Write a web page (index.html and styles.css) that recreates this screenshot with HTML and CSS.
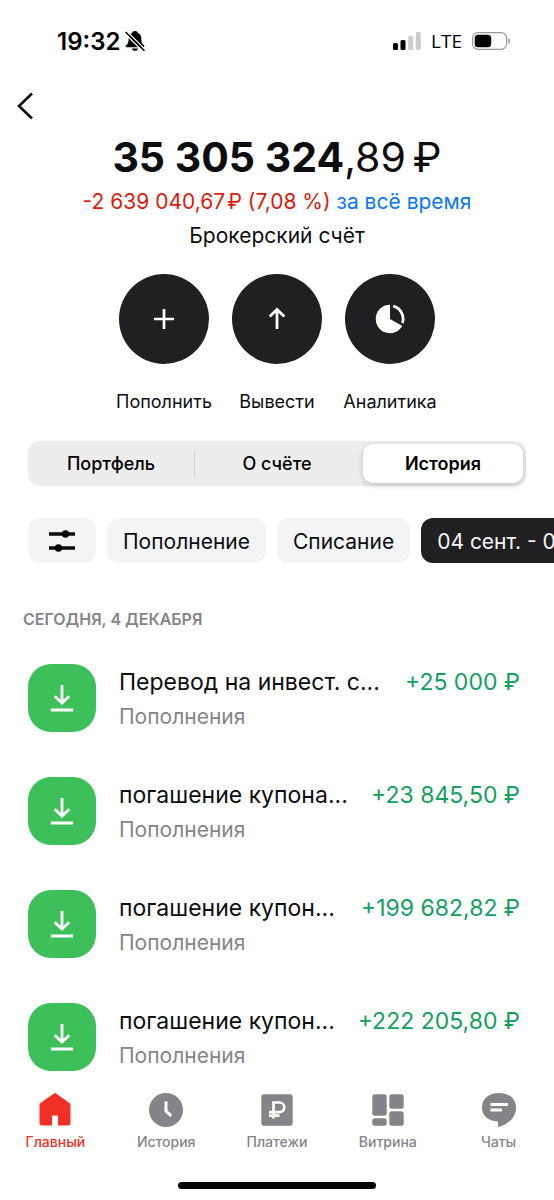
FILE: index.html
```html
<!DOCTYPE html>
<html lang="ru">
<head>
<meta charset="utf-8">
<meta name="viewport" content="width=device-width, initial-scale=1">
<title>Брокерский счёт</title>
<link rel="stylesheet" href="styles.css">
</head>
<body>
<div class="app">
  <div class="status">
    <div class="status-left">
      <span class="clock">19:32</span>
      <svg class="bell" width="20" height="20" viewBox="0 0 20 20" aria-hidden="true">
        <path d="M10 0c-1.600 0-2.700.8-3 2C4.600 3 3.600 5.300 3.600 8c0 4-1 5-2.600 6.300-.7.700-.4 1.900.6 1.900h16.800c1 0 1.300-1.200.6-1.900C17.400 13 16.400 12 16.400 8c0-2.700-1-5-3.400-6-.3-1.200-1.400-2-3-2z"/>
        <path d="M7 17.500h6c-.3 1.500-1.500 2.300-3 2.300s-2.700-.8-3-2.300z"/>
        <path d="M0 2.500L18 20.500M2 .3L20.200 18.500" stroke="#fff" stroke-width="1.300"/>
        <path d="M.6 1L19.400 19.800" stroke="#000" stroke-width="1.500"/>
      </svg>
    </div>
    <div class="status-right">
      <svg width="28" height="18" viewBox="0 0 28 18" aria-hidden="true">
        <rect x="0" y="11" width="5" height="7" rx="1.500"/>
        <rect x="7.500" y="8" width="5" height="10" rx="1.500"/>
        <rect x="15.200" y="4" width="5" height="14" rx="1.500" fill="#ccc"/>
        <rect x="22.800" y="0" width="5" height="18" rx="1.500" fill="#ccc"/>
      </svg>
      <span class="network">LTE</span>
      <svg width="39" height="18" viewBox="0 0 39 18" aria-hidden="true">
        <rect x=".6" y=".6" width="34" height="16.800" rx="5.500" fill="none" stroke="#999" stroke-width="1.200"/>
        <rect x="2.700" y="2.700" width="16.500" height="12.600" rx="3.500"/>
        <path d="M36.300 6v6c1.200-.5 1.900-1.600 1.900-3s-.7-2.500-1.900-3z" fill="#999"/>
      </svg>
    </div>
  </div>

  <header class="topbar">
    <button class="back" type="button" aria-label="Назад">
      <svg width="18" height="28" viewBox="0 0 18 28"><path d="M16 1.500L3 14l13 12.500" fill="none" stroke="#0d0d0f" stroke-width="2.600"/></svg>
    </button>
  </header>

  <section class="summary">
    <h1 class="balance"><strong>35 305 324</strong>,89<span class="thin-gap">₽</span></h1>
    <p class="result"><span class="loss">-2 639 040,67<span class="hair-gap">₽</span> (7,08 %)</span> <a class="period" href="#">за всё время</a></p>
    <p class="account">Брокерский счёт</p>
  </section>

  <div class="actions">
    <button class="action" type="button">
      <span class="disc"><svg width="30" height="30" viewBox="0 0 30 30"><path d="M15 5v20M5 15h20" fill="none" stroke="#fff" stroke-width="2.700"/></svg></span>
      <span>Пополнить</span>
    </button>
    <button class="action" type="button">
      <span class="disc"><svg width="30" height="30" viewBox="0 0 30 30"><path d="M15 25V6M7.700 12.500L15 5.500l7.300 7" fill="none" stroke="#fff" stroke-width="2.800"/></svg></span>
      <span>Вывести</span>
    </button>
    <button class="action" type="button">
      <span class="disc"><svg width="30" height="30" viewBox="0 0 30 30"><path d="M15 15V.8A14.200 14.200 0 1 0 27.300 22z" fill="#fff"/><path d="M18.200 2.200A13 13 0 0 1 27.400 19" fill="none" stroke="#fff" stroke-width="2.800"/></svg></span>
      <span>Аналитика</span>
    </button>
  </div>

  <div class="segments">
    <button class="segment" type="button">Портфель</button>
    <button class="segment divided" type="button">О счёте</button>
    <button class="segment" type="button" aria-pressed="true"><span class="selected">История</span></button>
  </div>

  <div class="chips">
    <button class="chip filter" type="button" aria-label="Фильтры">
      <svg width="26" height="22" viewBox="0 0 26 22"><path d="M0 4h26M0 18h26" stroke="#0d0d0f" stroke-width="3.600"/><circle cx="16.500" cy="4" r="3.700"/><circle cx="9.500" cy="18" r="3.700"/></svg>
    </button>
    <button class="chip" type="button">Пополнение</button>
    <button class="chip" type="button">Списание</button>
    <button class="chip dark" type="button">04 сент. - 04 дек.</button>
  </div>

  <main class="history">
    <h2 class="day">СЕГОДНЯ, 4 ДЕКАБРЯ</h2>
    <ul class="list">
      <li class="row">
        <span class="badge"><svg width="24" height="28" viewBox="0 0 24 28"><path d="M12 1v18M4.800 12.300L12 19l7.200-6.700M.8 26h22.400" fill="none" stroke="#fff" stroke-width="2.800"/></svg></span>
        <div class="details"><p class="name">Перевод на инвест. с...</p><p class="kind">Пополнения</p></div>
        <span class="sum">+25 000 ₽</span>
      </li>
      <li class="row">
        <span class="badge"><svg width="24" height="28" viewBox="0 0 24 28"><path d="M12 1v18M4.800 12.300L12 19l7.200-6.700M.8 26h22.400" fill="none" stroke="#fff" stroke-width="2.800"/></svg></span>
        <div class="details"><p class="name">погашение купона...</p><p class="kind">Пополнения</p></div>
        <span class="sum">+23 845,50 ₽</span>
      </li>
      <li class="row">
        <span class="badge"><svg width="24" height="28" viewBox="0 0 24 28"><path d="M12 1v18M4.800 12.300L12 19l7.200-6.700M.8 26h22.400" fill="none" stroke="#fff" stroke-width="2.800"/></svg></span>
        <div class="details"><p class="name">погашение купон...</p><p class="kind">Пополнения</p></div>
        <span class="sum">+199 682,82 ₽</span>
      </li>
      <li class="row">
        <span class="badge"><svg width="24" height="28" viewBox="0 0 24 28"><path d="M12 1v18M4.800 12.300L12 19l7.200-6.700M.8 26h22.400" fill="none" stroke="#fff" stroke-width="2.800"/></svg></span>
        <div class="details"><p class="name">погашение купон...</p><p class="kind">Пополнения</p></div>
        <span class="sum">+222 205,80 ₽</span>
      </li>
    </ul>
  </main>

  <nav class="tabs">
    <a class="tab active" href="#">
      <svg width="34" height="34" viewBox="0 0 34 34"><path d="M16 .4q1-.7 2 0L31.500 10q1 .8 1 2v18q0 2.500-2.500 2.500h-10v-9q0-1-1-1h-4q-1 0-1 1v9H4q-2.500 0-2.500-2.500V12q0-1.200 1-2z"/></svg>
      <span>Главный</span>
    </a>
    <a class="tab" href="#">
      <svg width="34" height="34" viewBox="0 0 34 34"><circle cx="17" cy="17" r="17"/><path d="M17 8.500V18l5.200 4.800" fill="none" stroke="#fff" stroke-width="3"/></svg>
      <span>История</span>
    </a>
    <a class="tab" href="#">
      <svg width="34" height="34" viewBox="0 0 34 34"><rect x="1.300" y="1.300" width="31.400" height="31.400" rx="2.800"/><path d="M13.500 25.500V9.500h6a4.800 4.800 0 0 1 0 9.600H9M9 22.600h10.500" fill="none" stroke="#fff" stroke-width="2.700"/></svg>
      <span>Платежи</span>
    </a>
    <a class="tab" href="#">
      <svg width="34" height="34" viewBox="0 0 34 34"><rect x="1.300" y="1.300" width="14.400" height="21.400" rx="2.500"/><rect x="1.300" y="25.300" width="14.400" height="7.400" rx="2.500"/><rect x="18.300" y="1.300" width="14.400" height="14.400" rx="2.500"/><rect x="18.300" y="18.300" width="14.400" height="14.400" rx="2.500"/></svg>
      <span>Витрина</span>
    </a>
    <a class="tab" href="#">
      <svg width="34" height="34" viewBox="0 0 34 34"><path d="M17 0C27 0 34 5.500 34 14.500c0 9-6.500 16-16.500 19.300-.8.300-1.500 0-1.500-.8v-4.600C6 28 0 23 0 14.500 0 5.500 7 0 17 0z"/><path d="M8.500 11.500h17.500M8.500 17h11.500" stroke="#fff" stroke-width="2.800"/></svg>
      <span>Чаты</span>
    </a>
  </nav>
  <div class="home-indicator"></div>
</div>
</body>
</html>
```

FILE: styles.css
```css
* { box-sizing: border-box; }

body {
  margin: 0;
  background: #fff;
  color: #0d0d0f;
  font-family: Inter, "Noto Sans", sans-serif;
}

button {
  margin: 0;
  padding: 0;
  border: 0;
  background: none;
  color: inherit;
  font: inherit;
  white-space: nowrap;
}

a { text-decoration: none; }
h1, h2, p, ul { margin: 0; padding: 0; }
svg { display: block; flex: none; }

.app {
  display: flex;
  flex-direction: column;
  min-height: 100vh;
  overflow: hidden;
}

.status {
  display: flex;
  align-items: center;
  justify-content: space-between;
  height: 82px;
  padding: 0 43px 0 57px;
  color: #000;
}

.status-left { display: flex; align-items: center; gap: 5px; }
.status-right { display: flex; align-items: center; gap: 10px; }
.clock { font-size: 24px; font-weight: 600; }
.network { font-family: "Open Sans", sans-serif; font-size: 19px; font-weight: 500; line-height: 24px; }

.topbar { padding: 10px 16px 0; }
.back { display: block; }

.summary { padding-top: 11px; text-align: center; }
.balance { font-size: 41px; font-weight: 400; line-height: 52px; }
.balance strong { font-weight: 700; }
.thin-gap { margin-left: 7px; }
.hair-gap { margin-left: 2px; }
.result { font-size: 21px; line-height: 38px; }
.loss { color: #dc1a0c; }
.period { color: #0878f8; }
.account { font-size: 21px; line-height: 30px; }

.actions {
  display: flex;
  justify-content: center;
  padding-top: 23px;
}

.action {
  display: flex;
  flex-direction: column;
  align-items: center;
  gap: 25px;
  width: 113px;
  font-size: 18px;
  line-height: 26px;
}

.disc {
  display: flex;
  align-items: center;
  justify-content: center;
  width: 90px;
  height: 90px;
  border-radius: 50%;
  background: #202022;
}

.segments {
  display: flex;
  height: 45px;
  margin: 26px 28px 0;
  border-radius: 12px;
  background: #ededed;
  color: #000;
}

.segment {
  display: flex;
  align-items: stretch;
  justify-content: center;
  flex: 1;
  padding: 3px;
  font-size: 18px;
  font-weight: 500;
  line-height: 39px;
}

.divided {
  background: linear-gradient(#d4d4d6, #d4d4d6) left center / 1px 26px no-repeat;
}

.selected {
  flex: 1;
  border-radius: 10px;
  background: #fff;
  font-weight: 600;
  box-shadow: 0 2px 6px rgba(0, 0, 0, .2);
}

.chips {
  display: flex;
  gap: 11px;
  padding: 32px 0 0 28px;
}

.chip {
  flex: none;
  display: flex;
  align-items: center;
  justify-content: center;
  height: 45px;
  padding: 2px 16px 0;
  border-radius: 12px;
  background: #f3f4f6;
  font-size: 21px;
}

.filter { width: 68px; padding: 0; }
.dark { background: #202022; color: #f5f5f6; }

.history { padding: 45px 34px 18px 28px; }

.day {
  margin-left: -5px;
  color: #858589;
  font-size: 16px;
  font-weight: 600;
  line-height: 22px;
}

.list {
  display: flex;
  flex-direction: column;
  gap: 45px;
  padding-top: 34px;
  list-style: none;
}

.row { display: flex; height: 68px; }

.badge {
  flex: none;
  display: flex;
  align-items: center;
  justify-content: center;
  width: 68px;
  height: 68px;
  border-radius: 23px;
  background: #3dc05a;
}

.details { flex: 1; min-width: 0; padding-left: 23px; }

.name {
  overflow: hidden;
  font-size: 23px;
  line-height: 36px;
  text-overflow: ellipsis;
  white-space: nowrap;
}

.kind { color: #858589; font-size: 21px; line-height: 33px; }

.sum {
  flex: none;
  padding-left: 16px;
  color: #12a05c;
  font-size: 23px;
  line-height: 36px;
}

.tabs {
  display: grid;
  grid-template-columns: repeat(5, 1fr);
  margin-top: auto;
}

.tab {
  display: flex;
  flex-direction: column;
  align-items: center;
  gap: 5px;
  color: #858589;
  fill: #858589;
  font-size: 14px;
  font-weight: 500;
  line-height: 20px;
}

.active { color: #f03024; fill: #f03024; }

.home-indicator {
  width: 198px;
  height: 7px;
  margin: 30px auto 11px;
  border-radius: 4px;
  background: #000;
}
```
